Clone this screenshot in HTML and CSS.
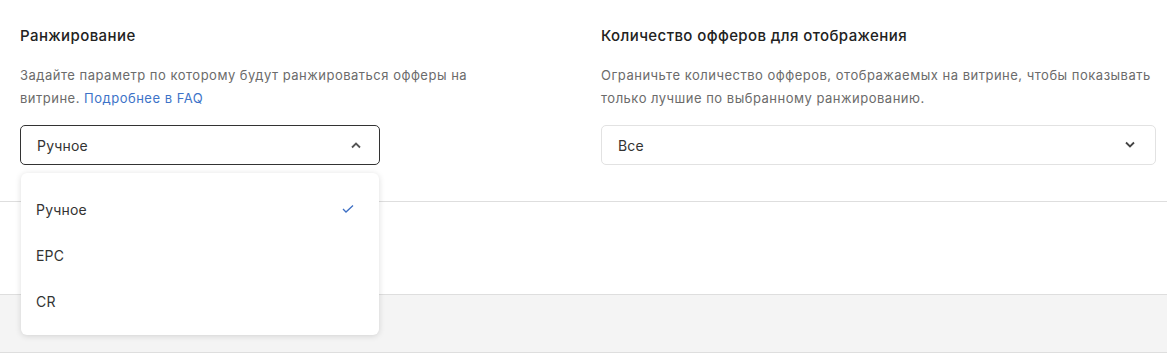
FILE: index.html
```html
<!DOCTYPE html>
<html lang="ru">
<head>
	<meta charset="UTF-8">
	<title>Ранжирование</title>
	<link rel="stylesheet" href="styles.css">
</head>
<body>
	<div class="settings">
		<div class="field">
			<h3 class="field-title">Ранжирование</h3>
			<p class="field-hint">Задайте параметр по которому будут ранжироваться офферы на витрине. <a href="#" class="link">Подробнее в FAQ</a></p>
			<div class="select-wrap">
				<div class="select select-open">
					<span>Ручное</span>
					<svg class="chevron" width="12" height="8" viewBox="0 0 12 8"><path d="M2 6.5 L6 2.5 L10 6.5" fill="none" stroke="#555" stroke-width="1.8"/></svg>
				</div>
				<ul class="dropdown">
					<li class="option">Ручное
						<svg class="check" width="14" height="10" viewBox="0 0 14 10"><path d="M2 5 L5 8 L12 1.5" fill="none" stroke="#3d6fc4" stroke-width="1.3"/></svg>
					</li>
					<li class="option">EPC</li>
					<li class="option">CR</li>
				</ul>
			</div>
		</div>
		<div class="field">
			<h3 class="field-title">Количество офферов для отображения</h3>
			<p class="field-hint">Ограничьте количество офферов, отображаемых на витрине, чтобы показывать только лучшие по выбранному ранжированию.</p>
			<div class="select select-wide">
				<span>Все</span>
				<svg class="chevron" width="12" height="8" viewBox="0 0 12 8"><path d="M2 1.5 L6 5.5 L10 1.5" fill="none" stroke="#444" stroke-width="1.8"/></svg>
			</div>
		</div>
	</div>
	<div class="spacer"></div>
	<div class="footer"></div>
</body>
</html>
```

FILE: styles.css
```css
body{
	margin: 0;
	background: #fff;
	font-family: Inter, "Noto Sans", sans-serif;
	color: #222;
}
.settings{
	display: grid;
	grid-template-columns: 561px 555px;
	column-gap: 20px;
	padding: 25px 11px 36px 20px;
	border-bottom: 1px solid #dedede;
}
.field-title{
	margin: 0;
	font-size: 15px;
	font-weight: 500;
	line-height: 22px;
	letter-spacing: 0.4px;
	color: #222;
}
.field-hint{
	margin: 17px 0 15px;
	font-size: 13px;
	line-height: 23px;
	letter-spacing: 0.5px;
	color: #6b6b6b;
	max-width: 470px;
}
.field:last-child .field-hint{
	max-width: none;
}
.link{
	color: #3d73c8;
	text-decoration: none;
}
.select-wrap{
	position: relative;
	width: 360px;
}
.select{
	box-sizing: border-box;
	height: 40px;
	display: flex;
	align-items: center;
	justify-content: space-between;
	padding: 0 17px 0 16px;
	border: 1px solid #e2e2e2;
	border-radius: 5px;
	font-size: 14px;
	letter-spacing: 0.2px;
	color: #333;
}
.select-open{
	border-color: #333;
}
.select-wide{
	width: 555px;
	padding-right: 19px;
}
.dropdown{
	position: absolute;
	top: 48px;
	left: 1px;
	right: 1px;
	margin: 0;
	padding: 13px 0 11px;
	list-style: none;
	background: #fff;
	border-radius: 6px;
	box-shadow: 0 1px 6px rgba(0,0,0,0.14);
	z-index: 2;
}
.option{
	height: 46px;
	display: flex;
	align-items: center;
	justify-content: space-between;
	padding: 0 24px 0 15px;
	font-size: 14px;
	letter-spacing: 0.2px;
	color: #333;
}
.spacer{
	height: 92px;
}
.footer{
	height: 57px;
	background: #f4f4f4;
	border-top: 1px solid #dedede;
	border-bottom: 1px solid #dedede;
}
```
